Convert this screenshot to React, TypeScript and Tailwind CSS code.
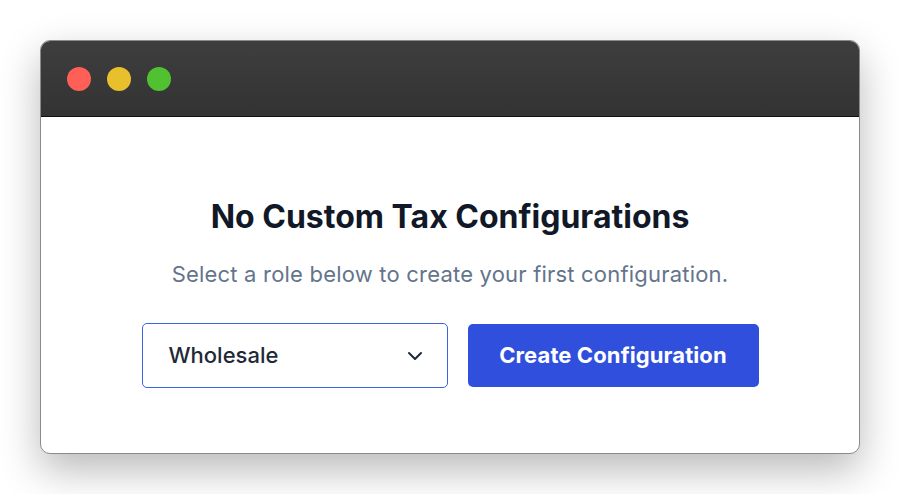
import { ChevronDown } from 'lucide-react';

export default function App(): React.ReactElement {
  return (
    <div className="w-[900px] h-[494px] bg-white flex items-start justify-center pt-[40px]" style={{ fontFamily: 'Inter, "Noto Sans", sans-serif' }}>
      <div className="w-[820px] h-[414px] rounded-[10px] border border-[#8a8a8a] bg-white overflow-hidden flex flex-col shadow-[0_16px_40px_rgba(0,0,0,0.28)]">
        <div className="h-[76px] bg-gradient-to-b from-[#3e3e3e] to-[#333333] border-b border-[#111] flex items-center gap-[16px] pl-[26px] shrink-0">
          <span className="w-[24px] h-[24px] rounded-full bg-[#fe5f57]" />
          <span className="w-[24px] h-[24px] rounded-full bg-[#e8bf2c]" />
          <span className="w-[24px] h-[24px] rounded-full bg-[#51c131]" />
        </div>
        <div className="flex-1 flex flex-col items-center pt-[80px]">
          <h1 className="text-[32px] leading-[40px] font-bold text-[#111827]">No Custom Tax Configurations</h1>
          <p className="mt-[22px] text-[22px] leading-[30px] text-[#64748b] tracking-[0.2px]">Select a role below to create your first configuration.</p>
          <div className="mt-[34px] flex items-center gap-[20px]">
            <div className="w-[306px] h-[65px] rounded-[5px] border border-[#3b63e6] flex items-center justify-between pl-[26px] pr-[20px]">
              <span className="text-[22px] font-medium text-[#1f2937]">Wholesale</span>
              <ChevronDown className="w-[24px] h-[24px] text-[#1f2937]" strokeWidth={2} />
            </div>
            <button className="w-[291px] h-[63px] rounded-[5px] bg-[#2f4fdc] text-white text-[22px] font-bold tracking-[0.1px]">Create Configuration</button>
          </div>
        </div>
      </div>
    </div>
  );
}
